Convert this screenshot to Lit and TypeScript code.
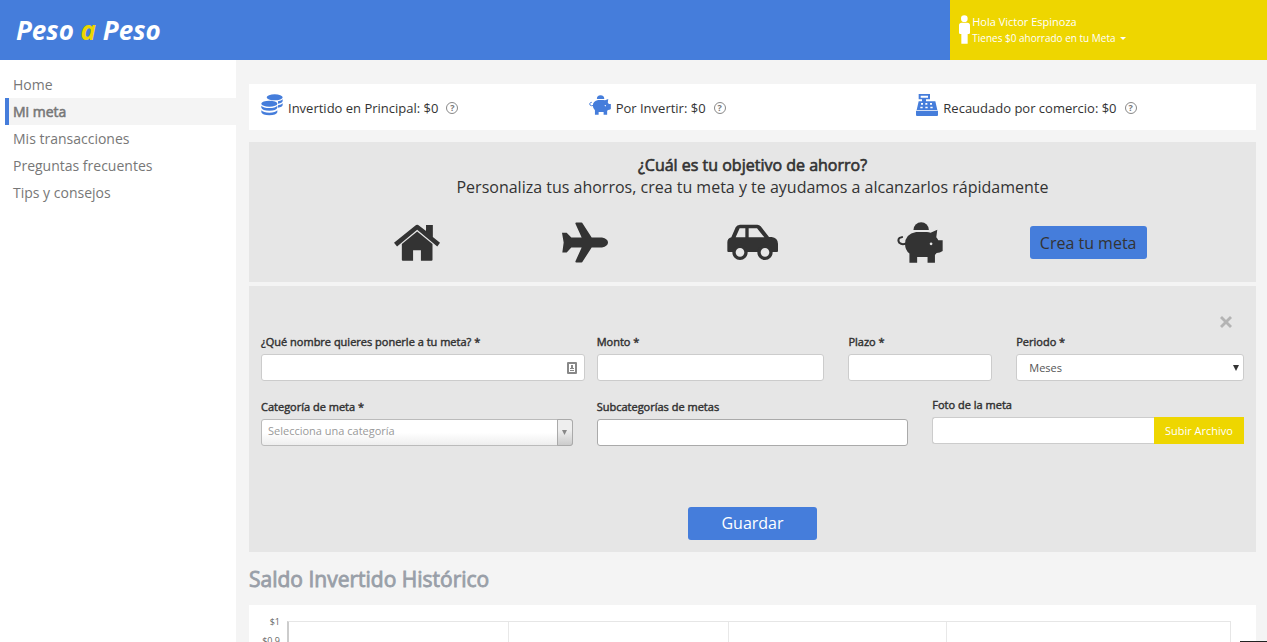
import { LitElement, html, css, svg } from "lit";
import { customElement, state } from "lit/decorators.js";

const pigShape = svg`
  <path d="M642 254a23 23 0 0 1 46 0z"/>
  <path fill-rule="evenodd" d="M650 260h32q6 0 11 2l20-9-3 22q4 4 6 9h13v32q-8 6-18 6l-5 6v23h-22v-17h-31v17h-23v-27q-13-11-13-28 0-30 33-36zM694 291a4 4 0 1 0 1 0z"/>
  <path class="line" d="M620 294q-12 5-20-2-6-9 1-15l7-2"/>`;

@customElement("app-icon")
class AppIcon extends LitElement {
  static properties = { name: {} };
  declare name: string;

  static styles = css`
    :host { display: inline-flex; }
    svg { display: block; width: 100%; height: 100%; fill: currentColor; }
    .line { fill: none; stroke: currentColor; stroke-width: 6; stroke-linecap: round; }
    .ring { fill: var(--hole, #fff); stroke: currentColor; stroke-width: 10; }
  `;

  private shapes: Record<string, [string, unknown]> = {
    house: ["43 238 135 107", svg`
      <path d="M43 292l62-50q6-5 12 0l20 16v-18h20v35l21 17-8 11-59-49-59 49z"/>
      <path d="M66 296l45-37 45 37v46q0 3-3 3h-31v-31H99v31H69q-3 0-3-3z"/>`],
    plane: ["546 230 138 122", svg`
      <path d="M546 262h14l14 14h31l-19-42q0-3 3-3h15q3 0 4 3l27 42h31q18 4 18 15t-18 15h-31l-27 42q-1 3-4 3h-15q-3 0-3-3l19-42h-31l-14 15h-13l4-30z"/>`],
    car: ["81 237 153 109", svg`
      <path fill-rule="evenodd" d="M82 291q0-12 12-15l13-30q4-8 13-8h52q6 0 10 5l25 32h8q18 2 19 20v22q0 3-3 3H85q-3 0-3-3zM107 276h29v-27h-17zM146 249v27h47l-22-27z"/>
      <circle class="ring" cx="120" cy="321" r="18"/>
      <circle class="ring" cx="195" cy="321" r="18"/>`],
    pig: ["593 230 137 122", pigShape],
    coins: ["62 55 66 66", svg`
      <ellipse cx="103" cy="65" rx="24" ry="9"/>
      <path d="M113 77q11-2 14-6v5q-1 6-14 8zM113 89q11-2 14-6v5q-1 6-14 8z"/>
      <ellipse cx="87" cy="84" rx="24" ry="9"/>
      <path d="M63 90q6 7 24 7t24-7v6q-3 9-24 9t-24-9zM63 104q6 7 24 7t24-7v6q-3 9-24 9t-24-9z"/>`],
    register: ["0 0 66 66", svg`
      <path fill-rule="evenodd" d="M8 0h34v16h-12v6h28l6 26H2l6-26h10v-6H8zM14 5v6h22V5zM15 27v5h6v-5zM28 27v5h6v-5zM42 27v5h6v-5zM13 38v5h7v-5zM28 38v5h7v-5zM43 38v5h7v-5z"/>
      <path d="M0 50h66v13q0 3-3 3H3q-3 0-3-3z"/>`],
    person: ["59 43 33 87", svg`
      <circle cx="75" cy="54" r="10"/>
      <path d="M67 66h17q8 0 8 8v22q0 4-4 4h-3v29H66v-29h-3q-4 0-4-4V74q0-8 8-8z"/>`],
    card: ["0 0 10 12", svg`
      <path fill-rule="evenodd" d="M1 0h8q1 0 1 1v10q0 1-1 1H1q-1 0-1-1V1q0-1 1-1zM2 2v8h6V2z"/>
      <path d="M4 3h2v3H4zM3 6h4v1H3zM3 8h4v1H3z"/>`],
    down: ["0 0 6 6", svg`<path d="M0 0h6L3 6z"/>`],
    caret: ["0 0 6 3", svg`<path d="M0 0h6L3 3z"/>`],
    cross: ["0 0 12 12", svg`<path d="M2 0l4 4 4-4 2 2-4 4 4 4-2 2-4-4-4 4-2-2 4-4-4-4z"/>`],
  };

  render() {
    const [box, shape] = this.shapes[this.name];
    return html`<svg viewBox=${box} aria-hidden="true">${shape}</svg>`;
  }
}

@customElement("app-root")
class AppRoot extends LitElement {
  @state() private current = "Mi meta";

  private links = ["Home", "Mi meta", "Mis transacciones", "Preguntas frecuentes", "Tips y consejos"];
  private stats = [
    { icon: "coins", text: "Invertido en Principal: $0" },
    { icon: "pig", text: "Por Invertir: $0" },
    { icon: "register", text: "Recaudado por comercio: $0" },
  ];
  private goals = [
    { icon: "house", label: "Casa" },
    { icon: "plane", label: "Viaje" },
    { icon: "car", label: "Auto" },
    { icon: "pig", label: "Ahorro" },
  ];
  private ticks = ["$1", "$0.9"];

  static styles = css`
    :host {
      display: flex;
      flex-direction: column;
      height: 100vh;
      overflow: hidden;
      background: #f4f4f4;
      color: #333;
      font-family: "Open Sans", "Noto Sans", sans-serif;
      font-size: 13px;
    }
    * { box-sizing: border-box; }
    button, input, select { font: inherit; margin: 0; }
    button { cursor: pointer; border: 0; }
    .heavy { font-weight: 400; -webkit-text-stroke: 0.04em currentColor; }

    .top { display: flex; flex: none; height: 60px; background: #457ddb; }
    .brand {
      flex: 1; display: flex; align-items: center; padding-left: 16px;
      color: #fff; font-size: 26px; font-weight: 700; font-style: italic; text-decoration: none; white-space: pre;
    }
    .brand em { color: #eed600; }
    .account {
      width: 25%; display: flex; align-items: center; padding: 0 9px; gap: 2px;
      background: #eed600; color: #fff; text-align: left;
    }
    .account .person { width: 11px; height: 29px; margin-bottom: 2px; }
    .who { display: block; font-size: 11px; line-height: 16px; }
    .saved { display: flex; align-items: center; gap: 4px; font-size: 10px; line-height: 16px; }
    .saved app-icon { width: 6px; height: 3px; }

    .body { flex: 1; display: flex; min-height: 0; }
    .side { flex: none; width: 236px; padding-top: 11px; background: #fff; }
    .side ul { list-style: none; margin: 0; padding: 0 0 0 5px; }
    .side a {
      display: block; border-left: 4px solid transparent; padding-left: 4px;
      font-size: 14px; line-height: 27px; color: #777; text-decoration: none;
    }
    .side a.on { border-color: #457ddb; background: #f4f4f4; }

    .main { flex: 1; min-width: 0; padding: 24px 11px 0 13px; overflow-y: auto; scrollbar-width: none; }
    .stats { display: grid; grid-template-columns: repeat(3, 1fr); padding: 0 12px; background: #fff; }
    .stat { display: flex; align-items: center; gap: 5px; height: 46px; padding-top: 2px; }
    .stat app-icon { width: 22px; height: 22px; margin-bottom: 6px; color: #457ddb; }
    .help {
      width: 12px; height: 12px; margin-left: 3px; padding: 0; border: 1px solid #888; border-radius: 50%;
      background: none; color: #777; font-size: 9px; font-weight: 700; line-height: 10px; text-align: center;
    }

    .panel { background: #e6e6e6; }
    .goal { margin-top: 12px; padding: 12px 0 19px; text-align: center; font-size: 16px; line-height: 22px; }
    .goal h2, .goal p { margin: 0; font-size: 16px; }
    .picks { display: grid; grid-template-columns: repeat(5, 2fr); padding: 0 8.3333%; margin-top: 24px; align-items: center; }
    .pick { display: flex; justify-content: center; padding: 0; background: none; color: #333; --hole: #e6e6e6; }
    .pick app-icon { height: 41px; width: 46px; }
    .pick .car { width: 51px; }
    .pick .house { height: 37px; }
    .primary { border-radius: 3px; height: 33px; background: #457ddb; font-size: 16px; line-height: 22px; }
    .create { justify-self: center; padding: 0 10px; color: #333; }

    .form { margin-top: 4px; padding: 28px 0 12px; }
    .close { display: block; margin: 0 24px 0 auto; padding: 0; width: 13px; height: 12px; background: none; color: #b4b4b4; }
    .close app-icon { width: 12px; height: 12px; }
    .row { display: grid; grid-template-columns: repeat(12, 1fr); margin-top: 7px; align-items: start; }
    .row + .row { margin-top: 15px; }
    .field { display: flex; flex-direction: column; padding: 0 12px; gap: 3px; }
    .field > label { font-size: 11px; line-height: 18px; }
    .s4 { grid-column: span 4; }
    .s3 { grid-column: span 3; }
    .s2 { grid-column: span 2; }
    .flush { padding-right: 0; }
    .wrap { display: grid; align-items: center; }
    .wrap > * { grid-area: 1 / 1; }
    .ctl {
      width: 100%; min-width: 0; height: 27px; padding: 0 12px; border: 1px solid #ccc; border-radius: 3px;
      background: #fff; color: #555; font-size: 11px; outline: 0;
    }
    select.ctl { appearance: none; }
    .dark { border-color: #aaa; }
    .mark { justify-self: end; pointer-events: none; }
    .mark.card { width: 10px; height: 12px; margin-right: 8px; color: #888; }
    .mark.down { width: 6px; height: 6px; margin-right: 5px; color: #333; }
    .choice .ctl { padding: 0 6px 5px; color: #999; border-color: #bbb; background: linear-gradient(#fff 50%, #eee); }
    .arrow {
      display: flex; align-items: center; justify-content: center; width: 16px; height: 27px;
      border: 1px solid #aaa; border-radius: 0 3px 3px 0; background: linear-gradient(#eee 40%, #ccc); color: #888;
    }
    .arrow app-icon { width: 5px; height: 5px; }
    .upload { display: flex; }
    .upload .ctl { flex: 1; border-radius: 3px 0 0 3px; border-right: 0; }
    .upload button { flex: none; height: 27px; padding: 0 11px; background: #eed600; color: #fff; font-size: 11px; }
    .third { padding-bottom: 2px; }
    .row.lower { align-items: end; }
    .save { display: block; width: 129px; margin: 61px auto 0; padding: 0 0 2px; color: #fff; }

    .title { margin: 12px 0 0; font-size: 21px; line-height: 30px; color: #999fa8; }
    .chart { display: flex; min-height: 240px; margin-top: 11px; padding: 7px 25px 20px 4px; background: #fff; }
    .ticks { width: 27px; margin: 0; padding: 0; list-style: none; text-align: right; font-size: 9px; line-height: 19px; color: #666; }
    .plot { flex: 1; display: grid; grid-template-columns: 219fr 220fr 219fr 284fr; margin: 9px 0 0 7px; border: solid #e6e6e6; border-width: 1px 1px 1px 2px; border-left-color: #ccc; }
    .plot i + i { border-left: 1px solid #e8e8e8; }
    .dock { position: fixed; right: 0; bottom: 0; width: 27px; height: 1px; background: #222; }
  `;

  private go(e: Event, link: string) {
    e.preventDefault();
    this.current = link;
  }

  render() {
    return html`
      <header class="top">
        <a class="brand" href="#">Peso <em>a</em> Peso</a>
        <button class="account">
          <app-icon class="person" name="person"></app-icon>
          <span>
            <span class="who">Hola Victor Espinoza</span>
            <span class="saved">Tienes $0 ahorrado en tu Meta <app-icon name="caret"></app-icon></span>
          </span>
        </button>
      </header>
      <div class="body">
        <nav class="side">
          <ul>
            ${this.links.map((l) => html`<li>
              <a href="#" class=${l === this.current ? "on heavy" : ""} @click=${(e: Event) => this.go(e, l)}>${l}</a>
            </li>`)}
          </ul>
        </nav>
        <main class="main">
          <section class="stats">
            ${this.stats.map((s) => html`<div class="stat">
              <app-icon name=${s.icon}></app-icon><span>${s.text}</span><button class="help">?</button>
            </div>`)}
          </section>

          <section class="panel goal">
            <h2 class="heavy">¿Cuál es tu objetivo de ahorro?</h2>
            <p>Personaliza tus ahorros, crea tu meta y te ayudamos a alcanzarlos rápidamente</p>
            <div class="picks">
              ${this.goals.map((g) => html`<button class="pick" aria-label=${g.label}>
                <app-icon class=${g.icon} name=${g.icon}></app-icon>
              </button>`)}
              <button class="primary create">Crea tu meta</button>
            </div>
          </section>

          <form class="panel form" @submit=${(e: Event) => e.preventDefault()}>
            <button type="button" class="close" aria-label="Cerrar"><app-icon name="cross"></app-icon></button>
            <div class="row">
              <div class="field s4 flush">
                <label class="heavy" for="name">¿Qué nombre quieres ponerle a tu meta? *</label>
                <div class="wrap"><input class="ctl" id="name"><app-icon class="mark card" name="card"></app-icon></div>
              </div>
              <div class="field s3">
                <label class="heavy" for="amount">Monto *</label>
                <input class="ctl" id="amount">
              </div>
              <div class="field s2">
                <label class="heavy" for="term">Plazo *</label>
                <input class="ctl" id="term">
              </div>
              <div class="field s3">
                <label class="heavy" for="period">Periodo *</label>
                <div class="wrap">
                  <select class="ctl" id="period"><option>Meses</option></select>
                  <app-icon class="mark down" name="down"></app-icon>
                </div>
              </div>
            </div>
            <div class="row lower">
              <div class="field s4">
                <label class="heavy" for="category">Categoría de meta *</label>
                <div class="wrap choice">
                  <select class="ctl" id="category"><option>Selecciona una categoría</option></select>
                  <span class="mark arrow"><app-icon name="down"></app-icon></span>
                </div>
              </div>
              <div class="field s4">
                <label class="heavy" for="sub">Subcategorías de metas</label>
                <input class="ctl dark" id="sub">
              </div>
              <div class="field s4 third">
                <label class="heavy" for="photo">Foto de la meta</label>
                <div class="upload"><input class="ctl" id="photo"><button type="button">Subir Archivo</button></div>
              </div>
            </div>
            <button class="primary save">Guardar</button>
          </form>

          <h2 class="title heavy">Saldo Invertido Histórico</h2>
          <section class="chart">
            <ul class="ticks">${this.ticks.map((t) => html`<li>${t}</li>`)}</ul>
            <div class="plot"><i></i><i></i><i></i><i></i></div>
          </section>
        </main>
      </div>
      <div class="dock"></div>
    `;
  }
}
